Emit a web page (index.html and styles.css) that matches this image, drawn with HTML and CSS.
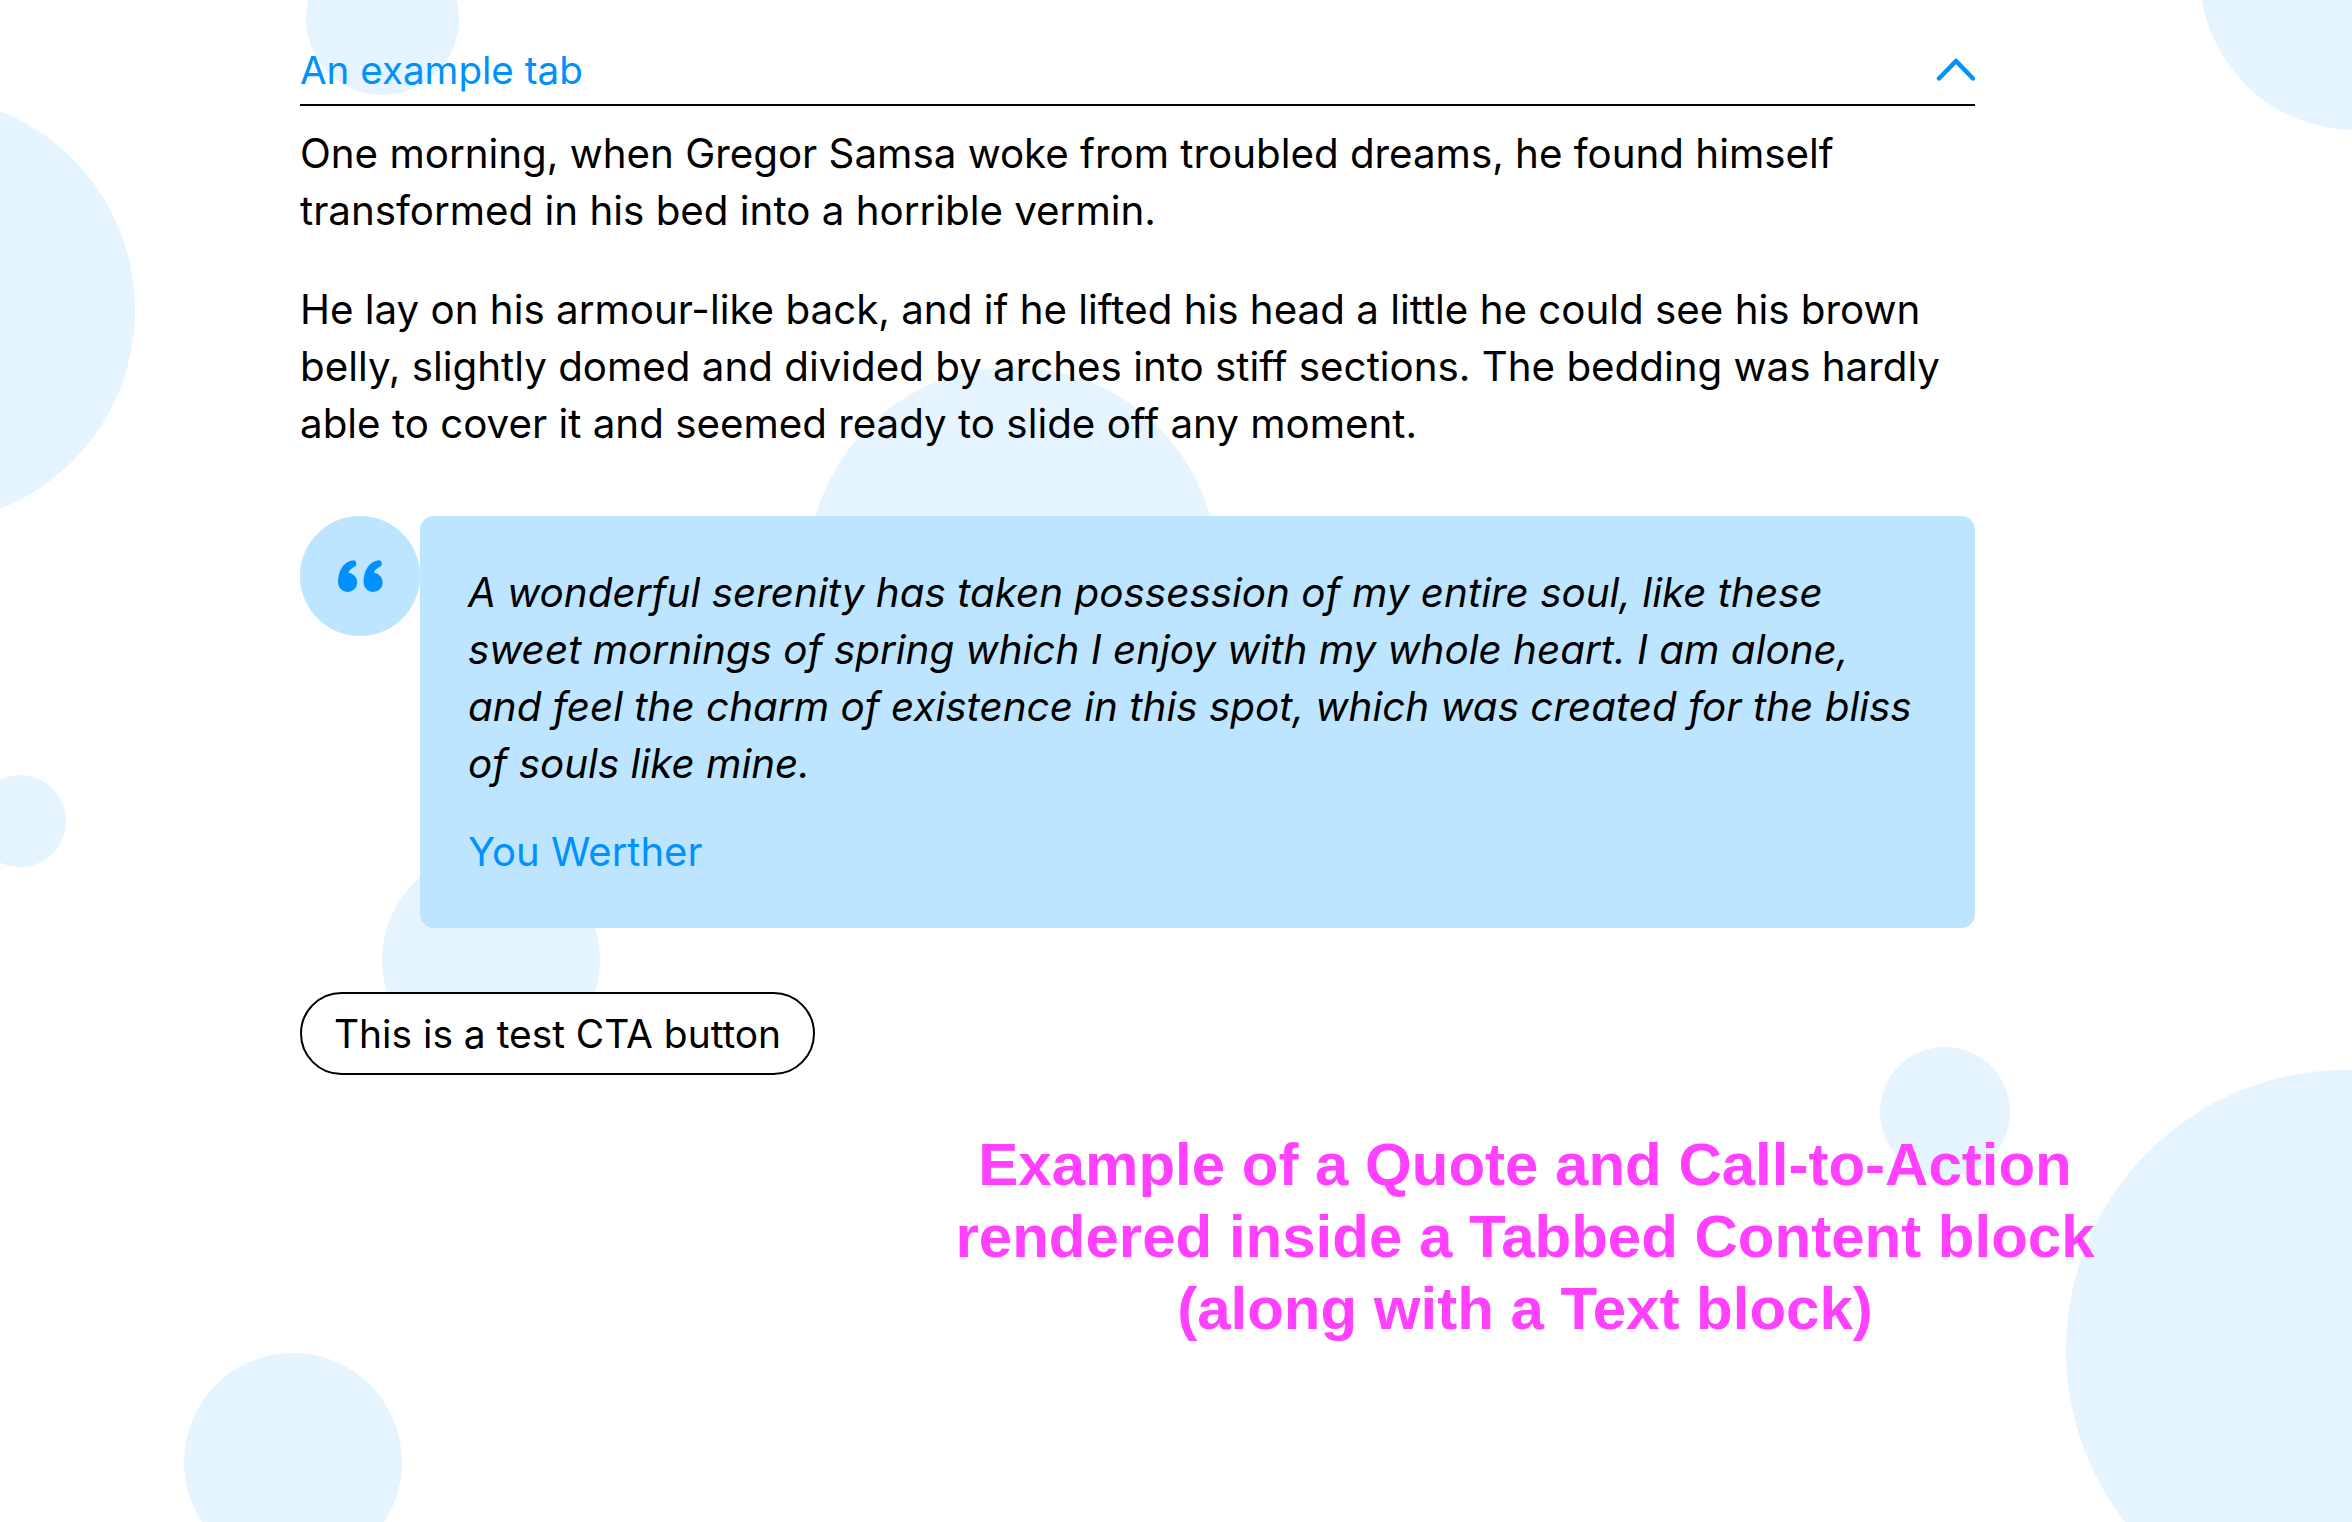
FILE: index.html
```html
<!DOCTYPE html>
<html lang="en">

<head>
    <meta charset="UTF-8">
    <meta name="viewport" content="width=device-width, initial-scale=1.0">
    <title>Tabbed Content</title>
    <link rel="stylesheet" href="styles.css">
</head>

<body>
    <!-- background bubbles -->
    <div class="bubble b1"></div>
    <div class="bubble b2"></div>
    <div class="bubble b3"></div>
    <div class="bubble b4"></div>
    <div class="bubble b5"></div>
    <div class="bubble b6"></div>
    <div class="bubble b7"></div>
    <div class="bubble b8"></div>
    <div class="bubble b9"></div>

    <div class="container">
        <div class="tab-header">
            <span>An example tab</span>
            <svg class="chevron" width="39" height="23" viewBox="0 0 39 23">
                <path d="M3 20.500 L20 3 L37 20.500" fill="none" stroke="#0091ff" stroke-width="4.500" stroke-linecap="round" stroke-linejoin="round" />
            </svg>
        </div>

        <div class="text-block">
            <p>One morning, when Gregor Samsa woke from troubled dreams, he found himself transformed in his bed into a horrible vermin.</p>
            <p>He lay on his armour-like back, and if he lifted his head a little he could see his brown belly, slightly domed and divided by arches into stiff sections. The bedding was hardly able to cover it and seemed ready to slide off any moment.</p>
        </div>

        <div class="quote">
            <div class="quote-icon">
                <svg width="45" height="32" viewBox="0 0 45 32">
                    <path d="M15 .3 C5 2 0 11 0 22.300 A9.600 9.600 0 1 0 10.500 12.800 C11 10 14 8 16.500 6.800 C19.500 5.300 18.500 -.3 15 .3 Z" fill="#0091ff" />
                    <path d="M40.500 .3 C30.500 2 25.500 11 25.500 22.300 A9.600 9.600 0 1 0 36 12.800 C36.500 10 39.500 8 42 6.800 C45 5.300 44 -.3 40.500 .3 Z" fill="#0091ff" />
                </svg>
            </div>
            <div class="quote-box">
                <p class="quote-text">A wonderful serenity has taken possession of my entire soul, like these sweet mornings of spring which I enjoy with my whole heart. I am alone, and feel the charm of existence in this spot, which was created for the bliss of souls like mine.</p>
                <p class="quote-author">You Werther</p>
            </div>
        </div>

        <a class="cta" href="#">This is a test CTA button</a>
    </div>

    <div class="caption">Example of a Quote and Call-to-Action<br>rendered inside a Tabbed Content block<br>(along with a Text block)</div>
</body>

</html>
```
FILE: styles.css
```css
html,
body {
    height: 100%;
}

body {
    margin: 0;
    position: relative;
    overflow: hidden;
    background: #fff;
    color: #000;
    font-family: "Inter", Arial, sans-serif;
    font-size: 40.3px;
    line-height: 57px;
}

.bubble {
    position: absolute;
    border-radius: 50%;
    background: #e5f4ff;
}

.b1 { left: 306px; top: -58px; width: 153px; height: 153px; }
.b2 { left: -293px; top: 96px; width: 428px; height: 428px; }
.b3 { left: 2200px; top: -180px; width: 310px; height: 310px; }
.b4 { left: 808px; top: 367px; width: 410px; height: 410px; }
.b5 { left: -26px; top: 775px; width: 92px; height: 92px; }
.b6 { left: 382px; top: 851px; width: 218px; height: 218px; }
.b7 { left: 1880px; top: 1047px; width: 130px; height: 130px; }
.b8 { left: 184px; top: 1353px; width: 218px; height: 218px; }
.b9 { left: 2066px; top: 1070px; width: 560px; height: 560px; }

.container {
    position: relative;
    width: 1675px;
    margin-left: 300px;
    padding-top: 41px;
}

.tab-header {
    display: flex;
    justify-content: space-between;
    align-items: center;
    box-sizing: border-box;
    height: 65px;
    padding-bottom: 5px;
    border-bottom: 2px solid #000;
    color: #0091ff;
    font-size: 38.6px;
}

.chevron {
    margin-bottom: 1px;
}

.text-block {
    padding-top: 19px;
}

.text-block p {
    margin: 0 0 42px;
}

.quote {
    display: flex;
    margin-top: 64px;
}

.quote-icon {
    flex: none;
    width: 120px;
    height: 120px;
    border-radius: 50%;
    background: #bde5ff;
    display: flex;
    justify-content: center;
    align-items: center;
}

.quote-box {
    flex: 1;
    background: #bde5ff;
    border-radius: 14px;
    padding: 48px 48px 48px;
}

.quote-box p {
    margin: 0;
}

.quote-text {
    font-style: italic;
    font-size: 40.4px;
}

.quote-box .quote-author {
    color: #0091ff;
    font-size: 40px;
    margin-top: 31px;
}

.cta {
    display: inline-block;
    margin-top: 64px;
    padding: 0 32px;
    height: 79px;
    line-height: 79px;
    border: 2px solid #000;
    border-radius: 42px;
    background: #fff;
    color: #000;
    font-size: 38.9px;
    text-decoration: none;
}

.caption {
    position: relative;
    margin: 54px 0 0 900px;
    width: 1250px;
    text-align: center;
    color: #ff40ff;
    font-family: "Liberation Sans", Arial, sans-serif;
    font-weight: bold;
    font-size: 60px;
    line-height: 72px;
}
```
